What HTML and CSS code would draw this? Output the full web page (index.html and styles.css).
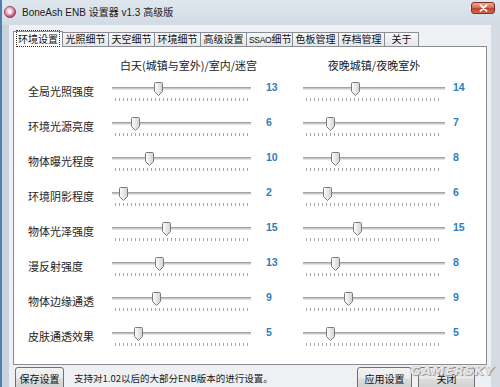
FILE: index.html
```html
<!DOCTYPE html>
<html lang="zh-CN">
<head>
<meta charset="utf-8">
<title>BoneAsh ENB 设置器 v1.3 高级版</title>
<link rel="stylesheet" href="styles.css">
</head>
<body>
<div class="window">
  <div class="titlebar">
    <span class="app-icon">
      <svg width="12" height="12" viewBox="0 0 12 12"><defs><radialGradient id="ic" cx="0.4" cy="0.35" r="0.7"><stop offset="0" stop-color="#fde8f0"/><stop offset="0.6" stop-color="#e58aa8"/><stop offset="1" stop-color="#9c3a5c"/></radialGradient></defs><circle cx="6" cy="6" r="5.5" fill="url(#ic)" stroke="#7a2d48" stroke-width="0.8"/><circle cx="6" cy="6" r="2.2" fill="#fff" opacity="0.8"/></svg>
    </span>
    <span class="title">BoneAsh ENB 设置器 v1.3 高级版</span>
    <span class="close">
      <svg width="9" height="8" viewBox="0 0 9 8"><path d="M1.5 1.2 L7.5 6.8 M7.5 1.2 L1.5 6.8" stroke="#fff" stroke-width="1.8" stroke-linecap="round"/></svg>
    </span>
  </div>
  <div class="client">
    <div class="tabs">
      <div class="tab active"><span class="focus">环境设置</span></div>
      <div class="tab">光照细节</div>
      <div class="tab">天空细节</div>
      <div class="tab">环境细节</div>
      <div class="tab">高级设置</div>
      <div class="tab"><span class="latin">SSAO</span>细节</div>
      <div class="tab">色板管理</div>
      <div class="tab">存档管理</div>
      <div class="tab tab-narrow">关于</div>
    </div>
    <div class="panel">
      <div class="grid">
        <div class="hdr hdr-day">白天(城镇与室外)/室内/迷宫</div>
        <div class="hdr hdr-night">夜晚城镇/夜晚室外</div>

        <div class="label">全局光照强度</div>
        <div class="slider"><div class="track"></div><div class="ticks"></div><span class="thumb" style="left:42px"><svg width="9" height="14" viewBox="0 0 9 14"><defs><linearGradient id="tg" x1="0" x2="1" y1="0" y2="0"><stop offset="0" stop-color="#ffffff"/><stop offset="1" stop-color="#d2d2d2"/></linearGradient></defs><path d="M1.5 0.5 H7.5 Q8.5 0.5 8.5 1.5 V9.5 L4.5 13.5 L0.5 9.5 V1.5 Q0.5 0.5 1.5 0.5 Z" fill="url(#tg)" stroke="#7b7b7b"/></svg></span></div>
        <div class="val val-l">13</div>
        <div class="slider"><div class="track"></div><div class="ticks"></div><span class="thumb" style="left:48px"><svg width="9" height="14" viewBox="0 0 9 14"><path d="M1.5 0.5 H7.5 Q8.5 0.5 8.5 1.5 V9.5 L4.5 13.5 L0.5 9.5 V1.5 Q0.5 0.5 1.5 0.5 Z" fill="url(#tg)" stroke="#7b7b7b"/></svg></span></div>
        <div class="val val-r">14</div>

        <div class="label">环境光源亮度</div>
        <div class="slider"><div class="track"></div><div class="ticks"></div><span class="thumb" style="left:19px"><svg width="9" height="14" viewBox="0 0 9 14"><path d="M1.5 0.5 H7.5 Q8.5 0.5 8.5 1.5 V9.5 L4.5 13.5 L0.5 9.5 V1.5 Q0.5 0.5 1.5 0.5 Z" fill="url(#tg)" stroke="#7b7b7b"/></svg></span></div>
        <div class="val val-l">6</div>
        <div class="slider"><div class="track"></div><div class="ticks"></div><span class="thumb" style="left:23px"><svg width="9" height="14" viewBox="0 0 9 14"><path d="M1.5 0.5 H7.5 Q8.5 0.5 8.5 1.5 V9.5 L4.5 13.5 L0.5 9.5 V1.5 Q0.5 0.5 1.5 0.5 Z" fill="url(#tg)" stroke="#7b7b7b"/></svg></span></div>
        <div class="val val-r">7</div>

        <div class="label">物体曝光程度</div>
        <div class="slider"><div class="track"></div><div class="ticks"></div><span class="thumb" style="left:33px"><svg width="9" height="14" viewBox="0 0 9 14"><path d="M1.5 0.5 H7.5 Q8.5 0.5 8.5 1.5 V9.5 L4.5 13.5 L0.5 9.5 V1.5 Q0.5 0.5 1.5 0.5 Z" fill="url(#tg)" stroke="#7b7b7b"/></svg></span></div>
        <div class="val val-l">10</div>
        <div class="slider"><div class="track"></div><div class="ticks"></div><span class="thumb" style="left:28px"><svg width="9" height="14" viewBox="0 0 9 14"><path d="M1.5 0.5 H7.5 Q8.5 0.5 8.5 1.5 V9.5 L4.5 13.5 L0.5 9.5 V1.5 Q0.5 0.5 1.5 0.5 Z" fill="url(#tg)" stroke="#7b7b7b"/></svg></span></div>
        <div class="val val-r">8</div>

        <div class="label">环境阴影程度</div>
        <div class="slider"><div class="track"></div><div class="ticks"></div><span class="thumb" style="left:7px"><svg width="9" height="14" viewBox="0 0 9 14"><path d="M1.5 0.5 H7.5 Q8.5 0.5 8.5 1.5 V9.5 L4.5 13.5 L0.5 9.5 V1.5 Q0.5 0.5 1.5 0.5 Z" fill="url(#tg)" stroke="#7b7b7b"/></svg></span></div>
        <div class="val val-l">2</div>
        <div class="slider"><div class="track"></div><div class="ticks"></div><span class="thumb" style="left:20px"><svg width="9" height="14" viewBox="0 0 9 14"><path d="M1.5 0.5 H7.5 Q8.5 0.5 8.5 1.5 V9.5 L4.5 13.5 L0.5 9.5 V1.5 Q0.5 0.5 1.5 0.5 Z" fill="url(#tg)" stroke="#7b7b7b"/></svg></span></div>
        <div class="val val-r">6</div>

        <div class="label">物体光泽强度</div>
        <div class="slider"><div class="track"></div><div class="ticks"></div><span class="thumb" style="left:50px"><svg width="9" height="14" viewBox="0 0 9 14"><path d="M1.5 0.5 H7.5 Q8.5 0.5 8.5 1.5 V9.5 L4.5 13.5 L0.5 9.5 V1.5 Q0.5 0.5 1.5 0.5 Z" fill="url(#tg)" stroke="#7b7b7b"/></svg></span></div>
        <div class="val val-l">15</div>
        <div class="slider"><div class="track"></div><div class="ticks"></div><span class="thumb" style="left:50px"><svg width="9" height="14" viewBox="0 0 9 14"><path d="M1.5 0.5 H7.5 Q8.5 0.5 8.5 1.5 V9.5 L4.5 13.5 L0.5 9.5 V1.5 Q0.5 0.5 1.5 0.5 Z" fill="url(#tg)" stroke="#7b7b7b"/></svg></span></div>
        <div class="val val-r">15</div>

        <div class="label">漫反射强度</div>
        <div class="slider"><div class="track"></div><div class="ticks"></div><span class="thumb" style="left:43px"><svg width="9" height="14" viewBox="0 0 9 14"><path d="M1.5 0.5 H7.5 Q8.5 0.5 8.5 1.5 V9.5 L4.5 13.5 L0.5 9.5 V1.5 Q0.5 0.5 1.5 0.5 Z" fill="url(#tg)" stroke="#7b7b7b"/></svg></span></div>
        <div class="val val-l">13</div>
        <div class="slider"><div class="track"></div><div class="ticks"></div><span class="thumb" style="left:28px"><svg width="9" height="14" viewBox="0 0 9 14"><path d="M1.5 0.5 H7.5 Q8.5 0.5 8.5 1.5 V9.5 L4.5 13.5 L0.5 9.5 V1.5 Q0.5 0.5 1.5 0.5 Z" fill="url(#tg)" stroke="#7b7b7b"/></svg></span></div>
        <div class="val val-r">8</div>

        <div class="label">物体边缘通透</div>
        <div class="slider"><div class="track"></div><div class="ticks"></div><span class="thumb" style="left:40px"><svg width="9" height="14" viewBox="0 0 9 14"><path d="M1.5 0.5 H7.5 Q8.5 0.5 8.5 1.5 V9.5 L4.5 13.5 L0.5 9.5 V1.5 Q0.5 0.5 1.5 0.5 Z" fill="url(#tg)" stroke="#7b7b7b"/></svg></span></div>
        <div class="val val-l">9</div>
        <div class="slider"><div class="track"></div><div class="ticks"></div><span class="thumb" style="left:41px"><svg width="9" height="14" viewBox="0 0 9 14"><path d="M1.5 0.5 H7.5 Q8.5 0.5 8.5 1.5 V9.5 L4.5 13.5 L0.5 9.5 V1.5 Q0.5 0.5 1.5 0.5 Z" fill="url(#tg)" stroke="#7b7b7b"/></svg></span></div>
        <div class="val val-r">9</div>

        <div class="label">皮肤通透效果</div>
        <div class="slider"><div class="track"></div><div class="ticks"></div><span class="thumb" style="left:22px"><svg width="9" height="14" viewBox="0 0 9 14"><path d="M1.5 0.5 H7.5 Q8.5 0.5 8.5 1.5 V9.5 L4.5 13.5 L0.5 9.5 V1.5 Q0.5 0.5 1.5 0.5 Z" fill="url(#tg)" stroke="#7b7b7b"/></svg></span></div>
        <div class="val val-l">5</div>
        <div class="slider"><div class="track"></div><div class="ticks"></div><span class="thumb" style="left:23px"><svg width="9" height="14" viewBox="0 0 9 14"><path d="M1.5 0.5 H7.5 Q8.5 0.5 8.5 1.5 V9.5 L4.5 13.5 L0.5 9.5 V1.5 Q0.5 0.5 1.5 0.5 Z" fill="url(#tg)" stroke="#7b7b7b"/></svg></span></div>
        <div class="val val-r">5</div>
      </div>
    </div>
    <div class="footer">
      <button class="btn btn-save">保存设置</button>
      <span class="status">支持对1.02以后的大部分ENB版本的进行设置。</span>
      <button class="btn btn-apply">应用设置</button>
      <button class="btn btn-close">关闭</button>
    </div>
  </div>
  <div class="watermark">GAMERSKY</div>
</div>
</body>
</html>
```

FILE: styles.css
```css
* { box-sizing: border-box; }

html, body {
  margin: 0;
  padding: 0;
}

body {
  width: 500px;
  height: 387px;
  overflow: hidden;
  font-family: "Noto Sans CJK SC", "Noto Sans", sans-serif;
  background: #cfd8e2;
}

.window {
  position: relative;
  width: 500px;
  height: 387px;
  display: flex;
  flex-direction: column;
  border-left: 2px solid #4f7fae;
  background: linear-gradient(90deg, #c8d3de 0%, #d9e0e7 40%, #d4dbe2 100%);
}

.titlebar {
  height: 25px;
  flex: none;
  display: flex;
  align-items: center;
  padding: 0 5px 2px 2px;
  background: linear-gradient(180deg, #dfe6ee 0%, #d2dbe4 100%);
}

.app-icon {
  width: 12px;
  height: 12px;
  display: flex;
}

.title {
  margin-left: 6px;
  font-family: "Liberation Sans", "Noto Sans CJK SC", sans-serif;
  font-size: 10px;
  color: #1b1b1b;
  white-space: nowrap;
}

.close {
  margin-left: auto;
  margin-top: -8px;
  width: 24px;
  height: 12px;
  border: 1px solid #7d3325;
  border-radius: 3px;
  background: linear-gradient(180deg, #eea996 0%, #d9664b 50%, #c24128 51%, #cf6a4f 100%);
  display: flex;
  align-items: center;
  justify-content: center;
}

.client {
  flex: 1;
  margin: 0 9px 0 7px;
  padding: 6px 4px 0 4px;
  background: #eef0f3;
  display: flex;
  flex-direction: column;
}

.tabs {
  display: flex;
  align-items: flex-end;
  height: 15px;
  position: relative;
  z-index: 1;
}

.tab {
  height: 14px;
  padding: 0 2px;
  margin-left: -1px;
  border: 1px solid #8a8d93;
  border-bottom: none;
  background: linear-gradient(180deg, #f7f7f7 0%, #e6e7e9 100%);
  font-size: 10px;
  line-height: 12px;
  color: #111;
  white-space: nowrap;
  width: 47px;
  text-align: center;
}

.tab.active {
  margin-left: 0;
  width: 50px;
  height: 16px;
  margin-bottom: -1px;
  background: #ffffff;
  padding-top: 1px;
}

.tab-narrow {
  width: 35px;
}

.focus {
  outline: 1px dotted #333;
  outline-offset: 0;
  padding: 0 1px;
}

.latin {
  font-family: "Liberation Sans", sans-serif;
  font-size: 8.5px;
  letter-spacing: -0.3px;
}

.panel {
  height: 319px;
  flex: none;
  background: #ffffff;
  border: 1px solid #8a8d93;
  padding-left: 14px;
}

.grid {
  display: grid;
  grid-template-columns: 84px 139px 52px 142px 1fr;
  grid-template-rows: 25px;
  grid-auto-rows: 35px;
}

.hdr {
  font-size: 11px;
  line-height: 14px;
  padding-top: 11px;
  color: #222;
  white-space: nowrap;
}

.hdr-day {
  grid-column: 2 / 4;
  margin-left: 8px;
}

.hdr-night {
  grid-column: 4 / 5;
  justify-self: center;
}

.label {
  grid-column: 1;
  font-size: 11px;
  line-height: 14px;
  padding-top: 12px;
  color: #1e1e1e;
  white-space: nowrap;
}

.slider {
  position: relative;
  padding-top: 15px;
}

.track {
  box-sizing: content-box;
  height: 1px;
  border-top: 1px solid #a3a3a3;
  border-bottom: 1px solid #e2e2e2;
  background: #c8c8c8;
}

.ticks {
  margin: 8px 3px 0 3px;
  height: 3px;
  background: repeating-linear-gradient(90deg, #a9a9a9 0 1px, transparent 1px 4px);
}

.thumb {
  position: absolute;
  top: 10px;
  width: 9px;
  height: 14px;
  display: block;
}

.thumb svg {
  display: block;
}

.val {
  font-family: "Liberation Sans", sans-serif;
  font-weight: bold;
  font-size: 10.5px;
  line-height: 14px;
  padding-top: 8px;
  color: #2f7db8;
}

.val-l {
  padding-left: 15px;
}

.val-r {
  padding-left: 8px;
}

.footer {
  display: flex;
  align-items: flex-start;
  margin-top: 2px;
}

.btn {
  height: 23px;
  padding: 0;
  border: 1px solid #707070;
  border-radius: 3px;
  background: linear-gradient(180deg, #f3f3f3 0%, #ebebeb 48%, #dddddd 52%, #cfcfcf 100%);
  font-family: "Noto Sans CJK SC", sans-serif;
  font-size: 10px;
  color: #111;
  line-height: 20px;
}

.btn-save {
  margin-left: 2px;
  width: 49px;
}

.status {
  margin-left: 10px;
  font-size: 9.5px;
  line-height: 23px;
  color: #1a1a1a;
  white-space: nowrap;
}

.btn-apply {
  margin-left: auto;
  width: 55px;
}

.btn-close {
  margin-left: 6px;
  margin-right: 12px;
  width: 57px;
}

.watermark {
  position: absolute;
  right: 6px;
  top: 363px;
  font-family: "DejaVu Sans", sans-serif;
  font-weight: bold;
  font-style: italic;
  font-size: 13px;
  letter-spacing: 0.3px;
  color: rgba(255, 255, 255, 0.8);
  text-shadow: 0 0 1px #8a8a8a, 1px 1px 1px #9a9a9a;
  pointer-events: none;
}
```
